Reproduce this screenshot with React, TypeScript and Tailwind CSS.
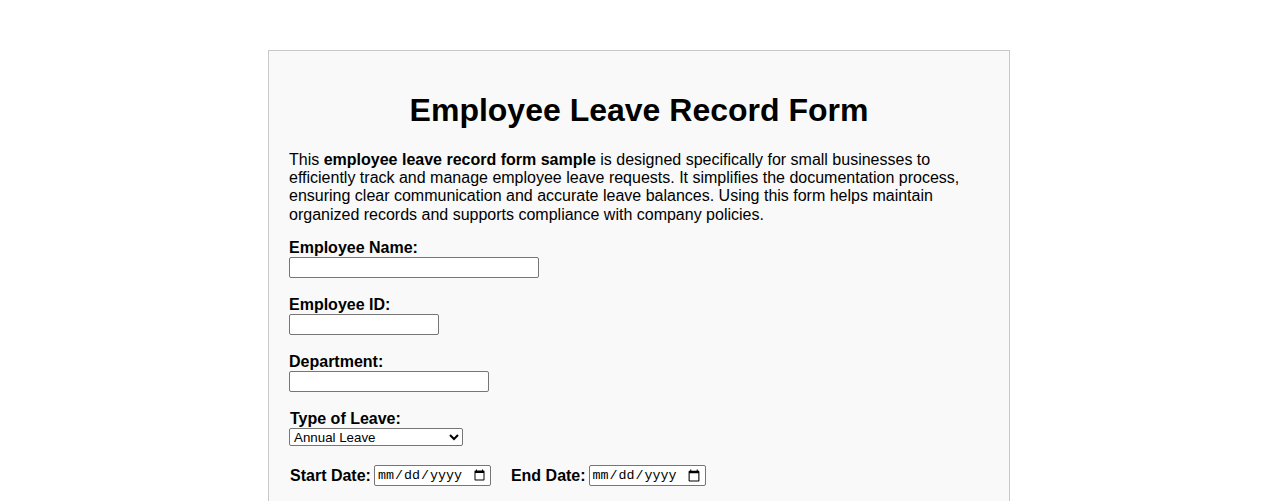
import React from 'react';

const inputBox =
  'block h-[21px] border border-[#767676] rounded-[2px] bg-white px-[2px] text-[13.33px] font-["Liberation_Sans",Arial,sans-serif]';

const dateBox =
  'h-[21px] w-[117px] border border-[#767676] rounded-[2px] bg-white px-[2px] text-[13.33px] font-["Liberation_Mono","DejaVu_Sans_Mono",monospace]';

function Field({ label, id, width }: { label: string; id: string; width: string }) {
  return (
    <div className="mb-[17.6px]">
      <label htmlFor={id} className="block font-bold leading-[18.4px]">
        {label}
      </label>
      <input id={id} type="text" className={`${inputBox} ${width}`} />
    </div>
  );
}

export default function App() {
  return (
    <div className="min-h-screen bg-white pt-[50px] font-['Liberation_Sans',Arial,sans-serif] text-base text-black">
      <div className="mx-auto w-[742px] border border-[#c8c8c8] bg-[#f9f9f9] p-5">
        <h1 className="my-[21.44px] text-center text-[32px] font-bold leading-[36.8px]">Employee Leave Record Form</h1>
        <p className="mb-[14.5px] leading-[18.4px]">
          This <strong className="font-bold">employee leave record form sample</strong> is designed specifically for
          small businesses to efficiently track and manage employee leave requests. It simplifies the documentation
          process, ensuring clear communication and accurate leave balances. Using this form helps maintain organized
          records and supports compliance with company policies.
        </p>

        <form>
          <Field label="Employee Name:" id="employeeName" width="w-[250px]" />
          <Field label="Employee ID:" id="employeeId" width="w-[150px]" />
          <Field label="Department:" id="department" width="w-[200px]" />

          <div className="mb-[19px] pl-px">
            <label htmlFor="leaveType" className="block font-bold leading-[18.4px]">
              Type of Leave:
            </label>
            <select
              id="leaveType"
              defaultValue="annual"
              className="-ml-px block h-[18px] w-[174px] rounded-[2px] border border-[#767676] bg-white text-[13.33px] font-['Liberation_Sans',Arial,sans-serif]"
            >
              <option value="annual">Annual Leave</option>
              <option value="sick">Sick Leave</option>
              <option value="personal">Personal Leave</option>
              <option value="unpaid">Unpaid Leave</option>
            </select>
          </div>

          <div className="mb-[17.6px] flex items-center pl-px">
            <label htmlFor="startDate" className="font-bold leading-[18.4px]">
              Start Date:
            </label>
            <input id="startDate" type="date" className={`ml-[3px] ${dateBox}`} />
            <label htmlFor="endDate" className="ml-5 font-bold leading-[18.4px]">
              End Date:
            </label>
            <input id="endDate" type="date" className={`ml-[3px] ${dateBox}`} />
          </div>

          <div className="mb-[17.6px]">
            <label htmlFor="totalDays" className="block font-bold leading-[18.4px]">
              Total Days:
            </label>
            <input id="totalDays" type="number" className={`${inputBox} w-[100px]`} />
          </div>
        </form>
      </div>
    </div>
  );
}
